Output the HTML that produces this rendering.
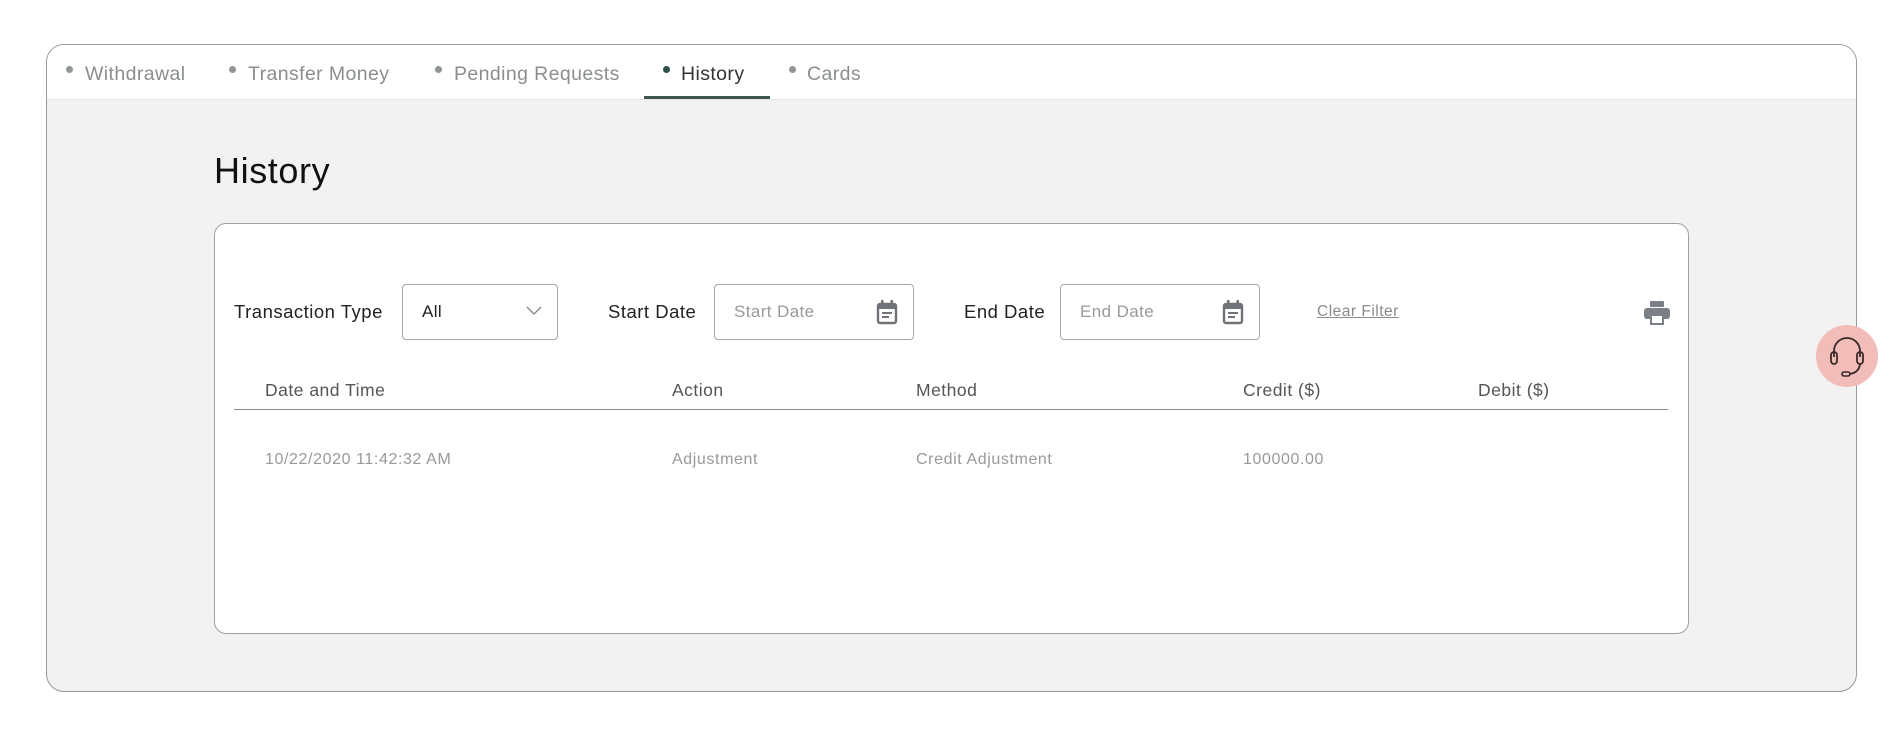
<!DOCTYPE html>
<html><head><meta charset="utf-8"><style>
*{margin:0;padding:0;box-sizing:border-box}
body{width:1898px;height:748px;background:#fff;font-family:"Liberation Sans",sans-serif;position:relative;overflow:hidden;letter-spacing:0.3px}
.a{position:absolute;white-space:nowrap}
.outer{left:46px;top:44px;width:1811px;height:648px;border:1px solid #9a9a9a;border-radius:18px;background:#f2f2f2;overflow:hidden}
.tabbar{left:0;top:0;width:100%;height:55px;background:#fff;border-bottom:1px solid #e6e6e6}
.tab{font-size:19.5px;color:#8a8f8d;letter-spacing:0.4px}
.dot{width:7px;height:7px;border-radius:50%;background:#8f9693}
.card{left:214px;top:223px;width:1475px;height:411px;border:1px solid #a0a0a0;border-radius:12px;background:#fff}
.lbl{font-size:18.5px;color:#222;top:301px;letter-spacing:0.5px}
.box{border:1px solid #a8a8a8;border-radius:4px;background:#fff;top:284px;height:56px}
.ph{font-size:17px;color:#9a9a9a;letter-spacing:0.4px}
.th{font-size:17.5px;color:#555;top:380px;letter-spacing:0.5px}
.td{font-size:16px;color:#999;top:451px;letter-spacing:0.6px}
</style></head><body>
<div class="a outer">
 <div class="a tabbar"></div>
</div>
<div class="a dot" style="left:66px;top:66px"></div><div class="a tab" style="left:85px;top:63px">Withdrawal</div>
<div class="a dot" style="left:229px;top:66px"></div><div class="a tab" style="left:248px;top:63px">Transfer Money</div>
<div class="a dot" style="left:435px;top:66px"></div><div class="a tab" style="left:454px;top:63px">Pending Requests</div>
<div class="a dot" style="left:663px;top:66px;background:#2f4f4a"></div><div class="a tab" style="left:681px;top:63px;color:#333">History</div>
<div class="a" style="left:644px;top:96px;width:126px;height:3px;background:#3e5550"></div>
<div class="a dot" style="left:789px;top:66px"></div><div class="a tab" style="left:807px;top:63px">Cards</div>

<div class="a" style="left:214px;top:150px;font-size:36px;color:#111;letter-spacing:0.6px">History</div>
<div class="a card"></div>

<div class="a lbl" style="left:234px">Transaction Type</div>
<div class="a box" style="left:402px;width:156px"></div>
<div class="a ph" style="left:422px;top:302px;color:#222">All</div>
<svg class="a" style="left:526px;top:304px" width="16" height="12" viewBox="0 0 16 12"><path d="M1 3 L8 10 L15 3" fill="none" stroke="#888" stroke-width="1.4"/></svg>

<div class="a lbl" style="left:608px">Start Date</div>
<div class="a box" style="left:714px;width:200px"></div>
<div class="a ph" style="left:734px;top:302px">Start Date</div>
<svg class="a" style="left:876px;top:299px" width="22" height="26" viewBox="0 0 22 26"><rect x="2" y="5" width="18" height="19" rx="2" fill="none" stroke="#6f7377" stroke-width="2.4"/><rect x="2" y="5" width="18" height="5" fill="#6f7377"/><rect x="5" y="1" width="2.5" height="5" fill="#6f7377"/><rect x="14.5" y="1" width="2.5" height="5" fill="#6f7377"/><rect x="6" y="13" width="10" height="2" fill="#6f7377"/><rect x="6" y="17" width="7" height="2" fill="#6f7377"/></svg>

<div class="a lbl" style="left:964px">End Date</div>
<div class="a box" style="left:1060px;width:200px"></div>
<div class="a ph" style="left:1080px;top:302px">End Date</div>
<svg class="a" style="left:1222px;top:299px" width="22" height="26" viewBox="0 0 22 26"><rect x="2" y="5" width="18" height="19" rx="2" fill="none" stroke="#6f7377" stroke-width="2.4"/><rect x="2" y="5" width="18" height="5" fill="#6f7377"/><rect x="5" y="1" width="2.5" height="5" fill="#6f7377"/><rect x="14.5" y="1" width="2.5" height="5" fill="#6f7377"/><rect x="6" y="13" width="10" height="2" fill="#6f7377"/><rect x="6" y="17" width="7" height="2" fill="#6f7377"/></svg>

<div class="a" style="left:1317px;top:303px;font-size:15.5px;color:#8a8a8a;text-decoration:underline;letter-spacing:0.5px">Clear Filter</div>
<svg class="a" style="left:1643px;top:300px" width="28" height="26" viewBox="0 0 28 26"><rect x="7" y="1" width="14" height="6" rx="1" fill="#7b8087"/><rect x="1" y="8" width="26" height="11" rx="3" fill="#7b8087"/><rect x="7" y="15" width="14" height="10" fill="#7b8087"/><rect x="9" y="16" width="10" height="7" fill="#fff"/></svg>

<div class="a th" style="left:265px">Date and Time</div>
<div class="a th" style="left:672px">Action</div>
<div class="a th" style="left:916px">Method</div>
<div class="a th" style="left:1243px">Credit ($)</div>
<div class="a th" style="left:1478px">Debit ($)</div>
<div class="a" style="left:234px;top:409px;width:1434px;height:1px;background:#8a8a8a"></div>
<div class="a td" style="left:265px">10/22/2020 11:42:32 AM</div>
<div class="a td" style="left:672px">Adjustment</div>
<div class="a td" style="left:916px">Credit Adjustment</div>
<div class="a td" style="left:1243px">100000.00</div>

<div class="a" style="left:1816px;top:325px;width:62px;height:62px;border-radius:50%;background:#f2bcb8"></div>
<svg class="a" style="left:1825px;top:333px" width="44" height="46" viewBox="0 0 44 46"><path d="M9 24 V18 A13 13 0 0 1 35 18 V24" fill="none" stroke="#3a2a2a" stroke-width="1.8"/><rect x="6" y="19" width="6" height="12" rx="3" fill="none" stroke="#3a2a2a" stroke-width="1.8"/><rect x="32" y="19" width="6" height="12" rx="3" fill="none" stroke="#3a2a2a" stroke-width="1.8"/><path d="M35 31 Q34 40 24 41" fill="none" stroke="#3a2a2a" stroke-width="1.8"/><rect x="17" y="39" width="8" height="4" rx="2" fill="none" stroke="#3a2a2a" stroke-width="1.6"/></svg>
</body></html>
